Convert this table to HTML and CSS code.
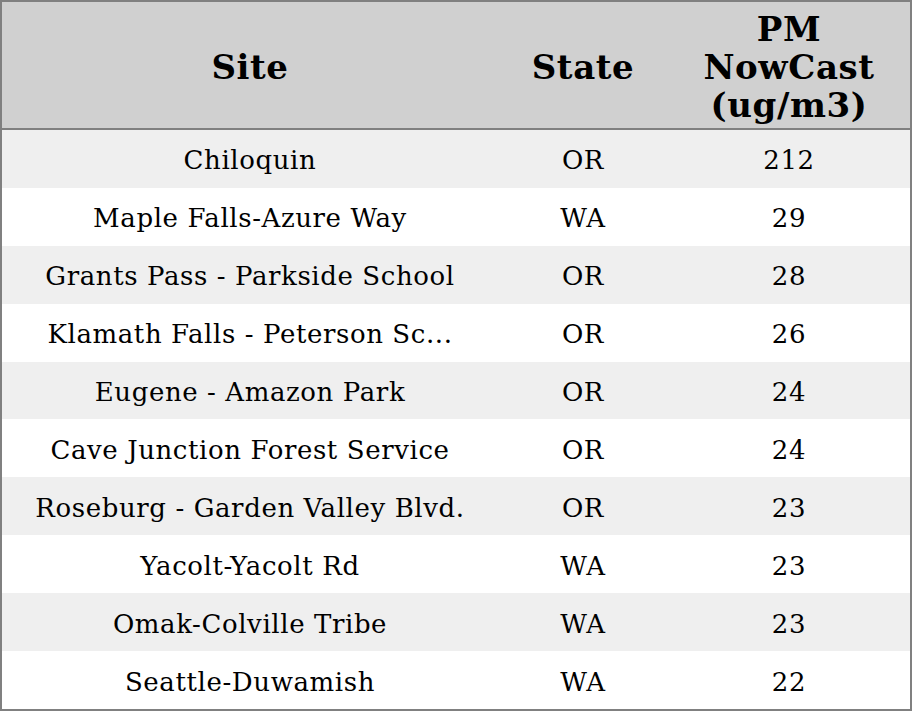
FILE: index.html
```html
<!DOCTYPE html>
<html>
<head>
<meta charset="utf-8">
<link rel="stylesheet" href="styles.css">
</head>
<body>
<table class="grid">
  <thead>
    <tr>
      <th class="c-site">Site</th>
      <th class="c-state">State</th>
      <th class="c-pm">PM<br>NowCast<br>(ug/m3)</th>
    </tr>
  </thead>
  <tbody>
    <tr><td>Chiloquin</td><td>OR</td><td>212</td></tr>
    <tr><td>Maple Falls-Azure Way</td><td>WA</td><td>29</td></tr>
    <tr><td>Grants Pass - Parkside School</td><td>OR</td><td>28</td></tr>
    <tr><td>Klamath Falls - Peterson Sc...</td><td>OR</td><td>26</td></tr>
    <tr><td>Eugene - Amazon Park</td><td>OR</td><td>24</td></tr>
    <tr><td>Cave Junction Forest Service</td><td>OR</td><td>24</td></tr>
    <tr><td>Roseburg - Garden Valley Blvd.</td><td>OR</td><td>23</td></tr>
    <tr><td>Yacolt-Yacolt Rd</td><td>WA</td><td>23</td></tr>
    <tr><td>Omak-Colville Tribe</td><td>WA</td><td>23</td></tr>
    <tr><td>Seattle-Duwamish</td><td>WA</td><td>22</td></tr>
  </tbody>
</table>
</body>
</html>
```
FILE: styles.css
```css
html, body {
  margin: 0;
  padding: 0;
  background: #ffffff;
}
.grid {
  width: 912px;
  height: 711px;
  border-collapse: separate;
  border-spacing: 0;
  border: 2px solid #808080;
  box-sizing: border-box;
  table-layout: fixed;
  font-family: "DejaVu Serif", serif;
  color: #000;
}
.grid th {
  background: #d0d0d0;
  font-size: 34px;
  letter-spacing: 0.6px;
  font-weight: bold;
  line-height: 38px;
  height: 123px;
  padding: 3px 0 0 0;
  text-align: center;
  vertical-align: middle;
  border-bottom: 2px solid #808080;
}
.c-site { width: 496px; }
.c-state { width: 170px; }
.c-pm { width: 242px; }
.grid td {
  font-size: 26px;
  letter-spacing: 0.6px;
  height: 54.9px;
  padding: 3px 0 0 0;
  text-align: center;
  vertical-align: middle;
  white-space: nowrap;
}
.grid tbody tr:nth-child(odd) td {
  background: #efefef;
}
```
